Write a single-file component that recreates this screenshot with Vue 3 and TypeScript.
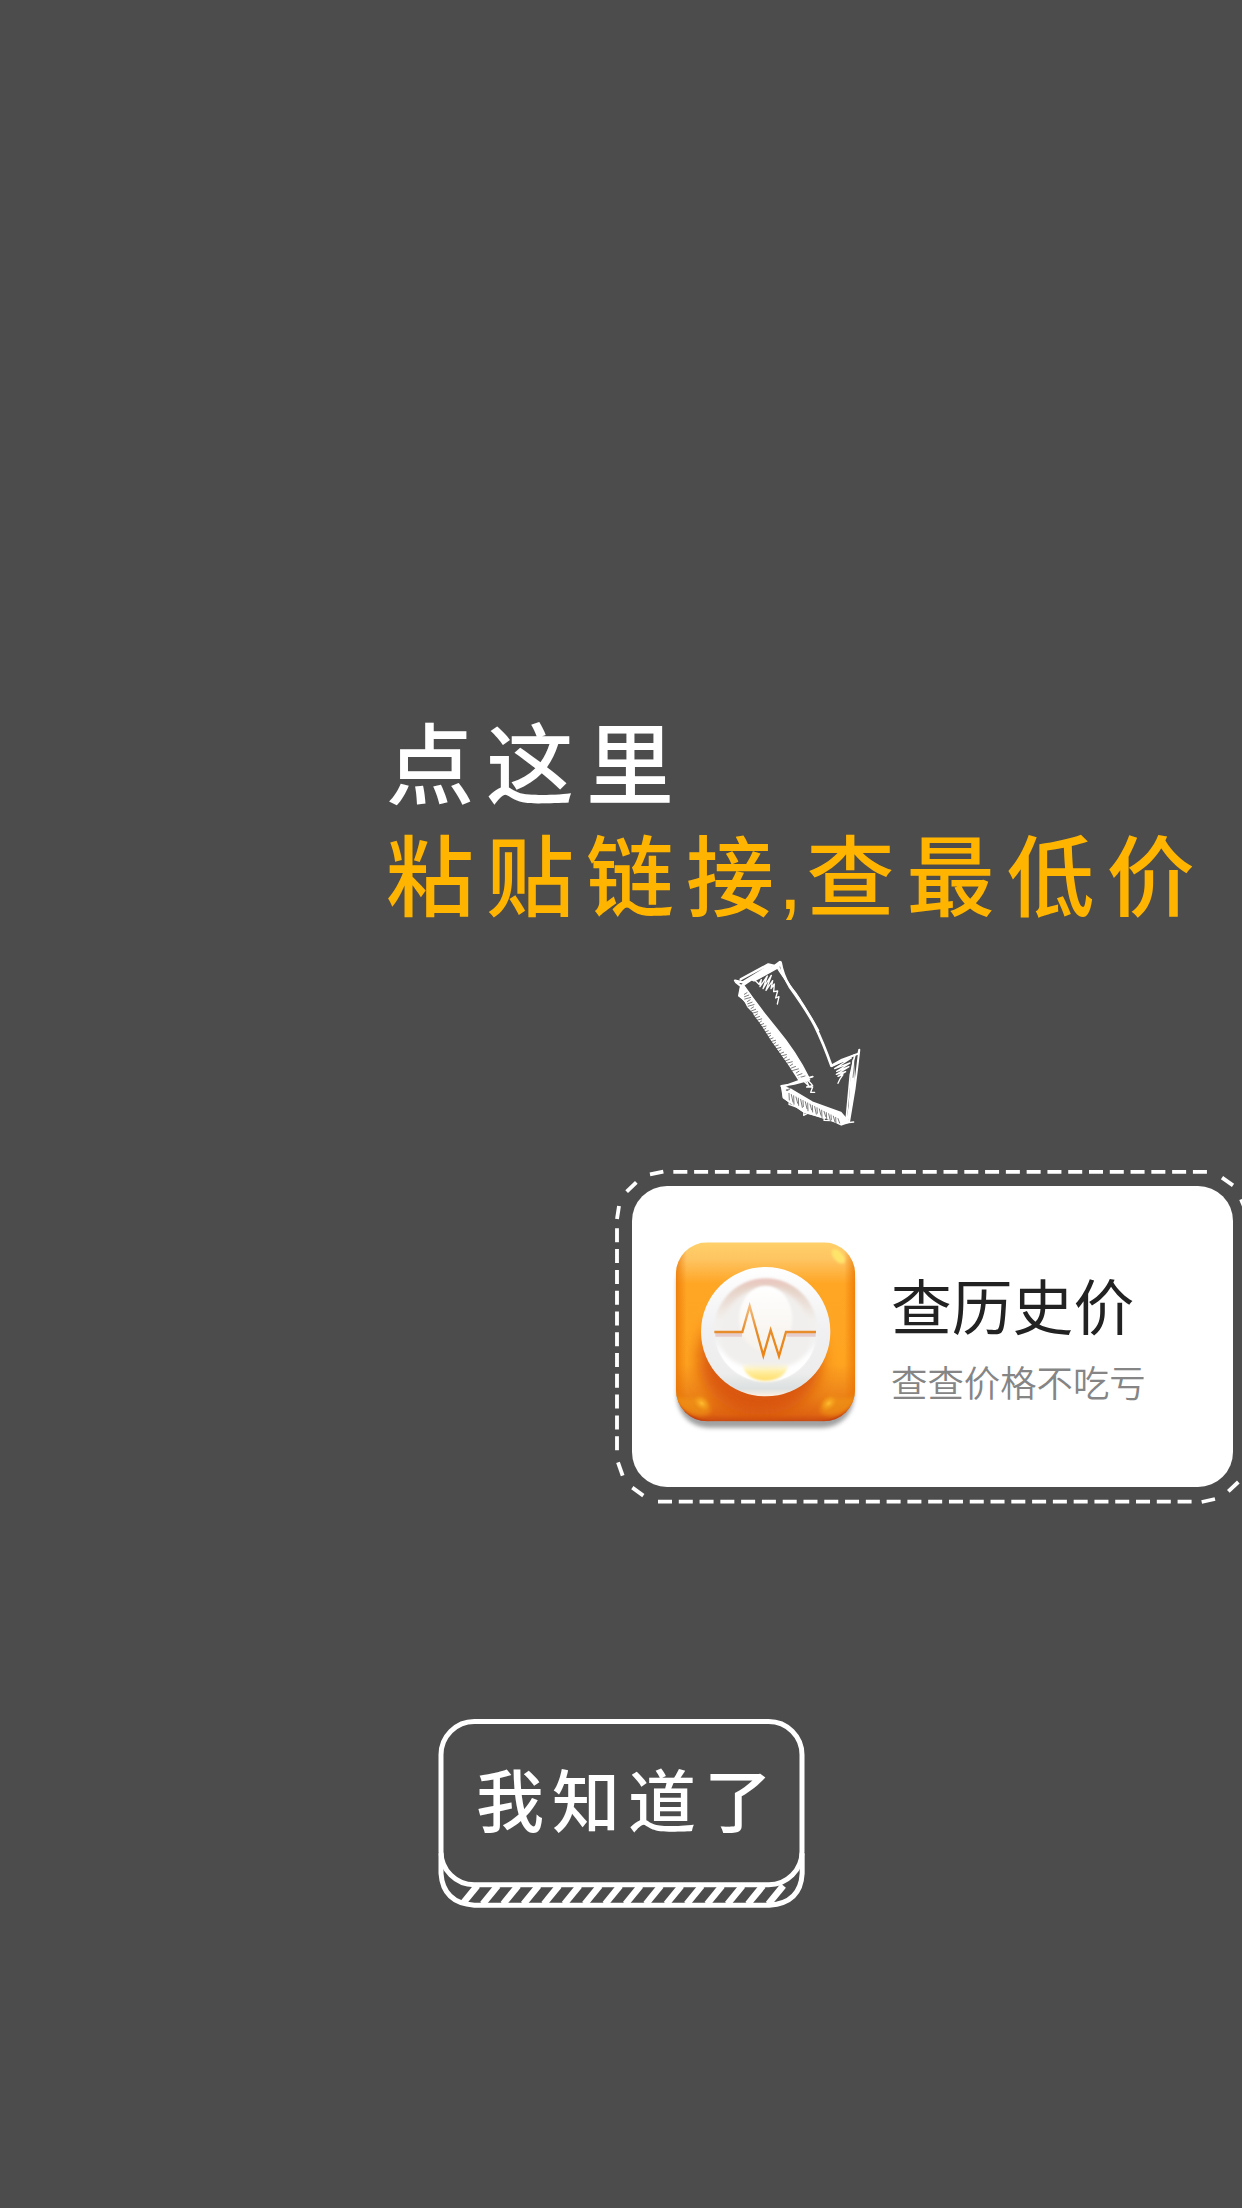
<script setup lang="ts">
const linkHint = '粘贴链'
const linkTail = '接,'
const priceHint = '查最低价'

// Straight edges and tilted corner pieces of the dashed frame
const edges: string[] = ['M205 50.5H1808', 'M159 1040H1765', 'M36 220V886']
const corners: string[] = [
  'M135 58L175 50', 'M65 110L94 82', 'M36 192L42 153',
  'M39 922L53 962', 'M82 998L115 1022',
  'M1851 68L1884 91', 'M1908 133L1924 170',
  'M1790 1041L1830 1032', 'M1870 1009L1900 981',
]

const stripes: number[] = Array.from({ length: 16 }, (_, i) => 97 + i * 61.2)
const shaftTicks: number[] = Array.from({ length: 36 }, (_, i) => i)
const headTicks: number[] = Array.from({ length: 22 }, (_, i) => i)

function shaftTick(i: number): string {
  const t = i / 35
  const x = 77 + 104 * t + 65 * t * t
  const y = 130 + t * 250
  const w = 8 + (i % 3) * 5
  return `M${x - w / 2} ${y + 3}l${w} -5`
}

function headTick(i: number): string {
  const x = 207 + i * 7
  const y = 430 + i * 3.6
  const h = 20 - i * 0.3 + (i % 3) * 3
  return `M${x} ${y}l${i % 2 ? 5 : 1} ${h}`
}
</script>

<template>
  <main class="guide">
    <h1 class="headline">
      <span class="line">点这里</span>
      <span class="line accent">{{ linkHint }}<span class="tail">{{ linkTail }}</span>{{ priceHint }}</span>
    </h1>

    <svg class="arrow" viewBox="0 0 450 570" fill="none" stroke="#fff" stroke-linecap="round" stroke-linejoin="round">
      <path d="M45 92L69 97L151 46M48 96L64 109L150 50M62 88L145 43L164 48L180 36" stroke-width="7" />
      <path d="M92 88L158 49L182 39L176 52L121 83L102 93Z" fill="#fff" stroke-width="4" />
      <path d="M182 38Q188 74 209 110Q259 179 284 226Q311 281 334 347" stroke-width="8" />
      <path d="M168 48Q190 84 226 127Q264 183 296 242" stroke-width="4" />
      <path d="M172 46Q196 92 240 150" stroke-width="6" />
      <path d="M105 91L117 103L124 89L120 110L142 78L129 116L154 76L138 121L158 92L153 116L163 102L161 125L173 123L167 144L177 140L172 162" stroke-width="4" />
      <path d="M68 102Q115 169 170 236Q230 308 266 382L261 391L241 391Q197 328 157 274L103 188L59 136L62 111Z" fill="#fff" stroke-width="4" />
      <path d="M62 112L57 137L75 151L84 170L101 187L104 194L138 239L155 261L177 300L210 347L238 391" stroke-width="6" />
      <path v-for="i in shaftTicks" :key="`s${i}`" :d="shaftTick(i)" stroke="#4c4c4c" stroke-width="2.2" />
      <path d="M334 347L366 329L415 311L418 299L412 350L404 414L387 516" stroke-width="6" />
      <path d="M335 349L405 314L391 374L386 427L378 514" stroke-width="5" />
      <path d="M400 331L393 398L389 468L382 512L392 477L402 399Z" fill="#fff" stroke-width="6" />
      <path d="M405 330L399 382" stroke="#4c4c4c" stroke-width="2" />
      <path d="M338 347L394 324L344 356L390 339L350 364L387 350L349 373L377 365L354 379L369 374L359 389L354 400" stroke-width="4" />
      <path d="M184 408L223 401L268 389M187 411L239 392L278 380" stroke-width="6" />
      <path d="M239 382L266 407L255 382L275 403L278 407L260 411L278 411L272 427L284 427" stroke-width="4" />
      <path d="M188 409L215 420L277 457L362 488L386 516L364 524L318 503L255 487L191 443Z" fill="#fff" stroke-width="6" />
      <path d="M184 408L190 442L208 456L207 463L232 472L252 486L251 496L265 489L313 505L312 511L335 512L365 520L401 516" stroke-width="4" />
      <path v-for="i in headTicks" :key="`h${i}`" :d="headTick(i)" stroke="#4c4c4c" stroke-width="2.2" />
      <path d="M199 420L210 416L205 421Z" stroke="#4c4c4c" stroke-width="2" />
    </svg>

    <section class="spotlight">
      <svg class="frame" viewBox="0 0 1911 1080" fill="none" stroke="#fff" stroke-width="11.5">
        <path v-for="edge in edges" :key="edge" :d="edge" stroke-dasharray="42 20.35" />
        <path v-for="corner in corners" :key="corner" :d="corner" />
      </svg>
      <article class="card">
        <svg class="app-icon" viewBox="0 0 630 645">
          <defs>
            <linearGradient id="body" x1="0" y1="0" x2="0" y2="1">
              <stop offset="0" stop-color="#ffd06a" /><stop offset=".09" stop-color="#fec563" />
              <stop offset=".23" stop-color="#ffa625" /><stop offset=".68" stop-color="#fea421" />
              <stop offset=".85" stop-color="#ed8419" /><stop offset=".96" stop-color="#df6512" />
              <stop offset="1" stop-color="#c84810" />
            </linearGradient>
            <linearGradient id="side">
              <stop offset="0" stop-color="#e87100" stop-opacity=".7" /><stop offset=".06" stop-color="#e87100" stop-opacity="0" />
              <stop offset=".94" stop-color="#e87100" stop-opacity="0" /><stop offset="1" stop-color="#e87100" stop-opacity=".7" />
            </linearGradient>
            <linearGradient id="ring" x1="0" y1="0" x2="0" y2="1">
              <stop offset="0" stop-color="#fff" /><stop offset=".5" stop-color="#f0f0f2" />
              <stop offset=".82" stop-color="#ededed" /><stop offset=".94" stop-color="#dce0e0" /><stop offset="1" stop-color="#fff0df" />
            </linearGradient>
            <linearGradient id="dish" x1="0" y1="0" x2="0" y2="1">
              <stop offset="0" stop-color="#e9c5bd" /><stop offset=".12" stop-color="#e6d3c8" />
              <stop offset=".4" stop-color="#f2f0ed" /><stop offset=".7" stop-color="#f3f3f4" /><stop offset="1" stop-color="#fff" />
            </linearGradient>
            <linearGradient id="bulb" x1="0" y1="0" x2="0" y2="1">
              <stop offset="0" stop-color="#fff" /><stop offset="1" stop-color="#f6f2ec" />
            </linearGradient>
            <linearGradient id="glow" x1="0" y1="0" x2="0" y2="1">
              <stop offset="0" stop-color="#fff8d8" stop-opacity="0" /><stop offset=".45" stop-color="#fff0a8" /><stop offset="1" stop-color="#ffdd67" />
            </linearGradient>
            <linearGradient id="pulse" x1="0" y1="232" x2="0" y2="400" gradientUnits="userSpaceOnUse">
              <stop offset="0" stop-color="#f5c38b" /><stop offset=".5" stop-color="#e88d2c" /><stop offset="1" stop-color="#ec8310" />
            </linearGradient>
            <radialGradient id="spot"><stop offset="0" stop-color="#ffbd31" /><stop offset="1" stop-color="#f6a018" stop-opacity="0" /></radialGradient>
            <filter id="soft" x="-30%" y="-30%" width="160%" height="160%"><feGaussianBlur stdDeviation="7" /></filter>
            <filter id="wide" x="-30%" y="-30%" width="160%" height="160%"><feGaussianBlur stdDeviation="22" /></filter>
            <filter id="fine" x="-30%" y="-30%" width="160%" height="160%"><feGaussianBlur stdDeviation="3" /></filter>
            <clipPath id="tile"><rect x="48" y="52" width="537" height="537" rx="94" /></clipPath>
            <clipPath id="dish-area"><circle cx="317" cy="315" r="155" /></clipPath>
          </defs>
          <rect x="51" y="82" width="531" height="526" rx="94" fill="#555" opacity=".55" filter="url(#soft)" />
          <g clip-path="url(#tile)">
            <rect x="48" y="52" width="537" height="538" fill="url(#body)" />
            <ellipse cx="300" cy="405" rx="185" ry="165" fill="#d65009" opacity=".85" filter="url(#wide)" />
            <rect x="48" y="52" width="537" height="538" fill="url(#side)" />
            <path d="M42 520Q90 590 170 595H42ZM592 520Q545 590 465 595H592Z" fill="#b72d0c" opacity=".75" filter="url(#fine)" />
            <path d="M44 512Q70 526 125 514Q155 530 152 562Q130 580 85 563Q52 545 44 512Z" fill="#f19a18" opacity=".6" filter="url(#soft)" />
            <path d="M589 512Q563 526 508 514Q478 530 481 562Q503 580 548 563Q581 545 589 512Z" fill="#f19a18" opacity=".6" filter="url(#soft)" />
            <ellipse cx="125" cy="535" rx="28" ry="20" fill="url(#spot)" transform="rotate(40 125 535)" />
            <ellipse cx="506" cy="535" rx="28" ry="20" fill="url(#spot)" transform="rotate(-40 506 535)" />
            <ellipse cx="535" cy="94" rx="26" ry="14" fill="#ffe46b" transform="rotate(49 535 94)" filter="url(#fine)" />
          </g>
          <circle cx="317" cy="320" r="194" fill="url(#ring)" />
          <circle cx="317" cy="315" r="155" fill="url(#dish)" filter="url(#fine)" />
          <g clip-path="url(#dish-area)">
            <ellipse cx="317" cy="330" rx="134" ry="143" fill="#f1efed" filter="url(#soft)" />
            <path d="M165 350Q180 445 260 470H375Q455 445 469 350Q430 425 317 440Q205 425 165 350Z" fill="#fff" filter="url(#soft)" />
          </g>
          <ellipse cx="317" cy="281" rx="80" ry="98" fill="url(#bulb)" filter="url(#fine)" />
          <path d="M248 418Q316 407 385 418C378 484 254 484 248 418Z" fill="url(#glow)" filter="url(#fine)" />
          <path d="M166 329H246M380 329H467" fill="none" stroke="#e3c7c8" stroke-width="13" opacity=".85" />
          <path d="M163 321H247L269 243L310 392L332 315L357 394L378 321H468" fill="none" stroke="url(#pulse)" stroke-width="7" stroke-miterlimit="8" />
        </svg>
        <div class="copy">
          <h2>查历史价</h2>
          <p>查查价格不吃亏</p>
        </div>
      </article>
    </section>

    <button class="confirm" type="button">
      <svg class="outline" viewBox="0 0 1170 615" fill="none" stroke="#fff" stroke-width="15">
        <path v-for="x in stripes" :key="x" :d="`M${x} 582L${x + 45} 527`" stroke-width="20" />
        <rect x="33" y="34.5" width="1083" height="490" rx="100" />
        <path d="M33 430V490Q39 579 133 585.5H1018Q1112 579 1116.500 490V430" />
      </svg>
      <span class="label">我知道了</span>
    </button>
  </main>
</template>

<style>
body {
  background: #4c4c4c;
}
</style>

<style scoped>
.guide {
  box-sizing: border-box;
  width: 1242px;
  height: 2208px;
  padding-top: 711px;
  display: flex;
  flex-direction: column;
  overflow: hidden;
  background: #4c4c4c;
  color: #fff;
  font-family: "Noto Sans CJK SC", sans-serif;
}

.headline {
  margin: 0 0 15px 386px;
  font-family: "Liberation Sans", "Noto Sans CJK SC", sans-serif;
  font-size: 88px;
  font-weight: 500;
  line-height: 112px;
  letter-spacing: 12px;
  white-space: nowrap;
}

.line {
  display: block;
}

.accent {
  color: #ffb400;
}

.tail {
  letter-spacing: 4px;
}

.arrow {
  width: 150px;
  height: 190px;
  margin-left: 720px;
}

.spotlight {
  display: grid;
  width: 637px;
  height: 360px;
  margin: 15px 0 0 605px;
}

.frame {
  grid-area: 1 / 1;
  width: 637px;
  height: 360px;
}

.card {
  grid-area: 1 / 1;
  box-sizing: border-box;
  width: 601px;
  height: 301px;
  margin: 31px 0 0 27px;
  padding: 39px 0 0 28px;
  display: flex;
  border-radius: 35px;
  background: #fff;
}

.app-icon {
  width: 210px;
  height: 215px;
}

.copy {
  margin: 35px 0 0 21px;
  white-space: nowrap;
}

.copy h2 {
  margin: 0;
  color: #222;
  font-size: 60.800px;
  font-weight: 400;
  line-height: 88px;
}

.copy p {
  margin: 7px 0 0;
  color: #858585;
  font-size: 36.400px;
  font-weight: 350;
  line-height: 53px;
}

.confirm {
  display: grid;
  width: 390px;
  height: 205px;
  margin: 195px 0 0 430px;
  padding: 0;
  border: 0;
  background: none;
  color: inherit;
  font-family: inherit;
}

.outline {
  grid-area: 1 / 1;
  width: 390px;
  height: 205px;
}

.label {
  grid-area: 1 / 1;
  padding: 38px 0 0 46px;
  text-align: left;
  font-size: 68px;
  font-weight: 500;
  line-height: 100px;
  letter-spacing: 8px;
}
</style>
